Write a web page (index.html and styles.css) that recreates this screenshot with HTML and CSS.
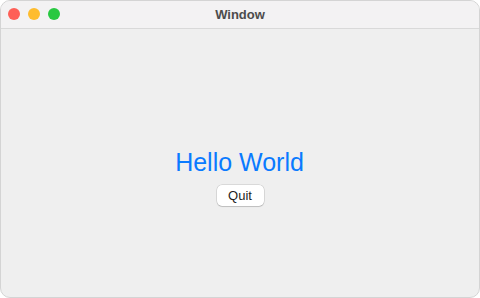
FILE: index.html
```html
<!DOCTYPE html>
<html>
<head>
<meta charset="utf-8">
<link rel="stylesheet" href="styles.css">
</head>
<body>
<div class="window">
  <div class="titlebar">
    <div class="lights">
      <span class="light red"></span>
      <span class="light yellow"></span>
      <span class="light green"></span>
    </div>
    <div class="title">Window</div>
  </div>
  <div class="content">
    <div class="hello">Hello World</div>
    <button class="quit">Quit</button>
  </div>
</div>
</body>
</html>
```
FILE: styles.css
```css
html, body {
  margin: 0;
  padding: 0;
  background: #ffffff;
}
.window {
  width: 480px;
  height: 298px;
  box-sizing: border-box;
  border: 1px solid #d4d4d4;
  border-radius: 10px;
  overflow: hidden;
  background: #efefef;
  display: flex;
  flex-direction: column;
  font-family: "Liberation Sans", Arial, sans-serif;
}
.titlebar {
  height: 27px;
  flex: none;
  background: #f3f2f3;
  border-bottom: 1px solid #d9d9d9;
  position: relative;
  display: flex;
  align-items: center;
  justify-content: center;
}
.lights {
  position: absolute;
  left: 7px;
  top: 7px;
  display: flex;
  gap: 8px;
}
.light {
  width: 12px;
  height: 12px;
  border-radius: 50%;
  display: block;
}
.red { background: #fe5f57; }
.yellow { background: #febc2e; }
.green { background: #28c840; }
.title {
  font-size: 13px;
  font-weight: bold;
  color: #4c4c4c;
}
.content {
  flex: 1;
  display: flex;
  flex-direction: column;
  align-items: center;
  padding-top: 118px;
}
.hello {
  font-size: 25px;
  line-height: 30px;
  color: #0a7aff;
  margin-right: 1px;
}
.quit {
  margin-top: 8px;
  width: 47px;
  height: 21px;
  padding: 0;
  border: none;
  border-radius: 5px;
  background: #ffffff;
  box-shadow: 0 0 0 0.5px rgba(0,0,0,0.18), 0 1px 1px rgba(0,0,0,0.12);
  font-family: "Liberation Sans", Arial, sans-serif;
  font-size: 13px;
  color: #1e1e1e;
}
```
